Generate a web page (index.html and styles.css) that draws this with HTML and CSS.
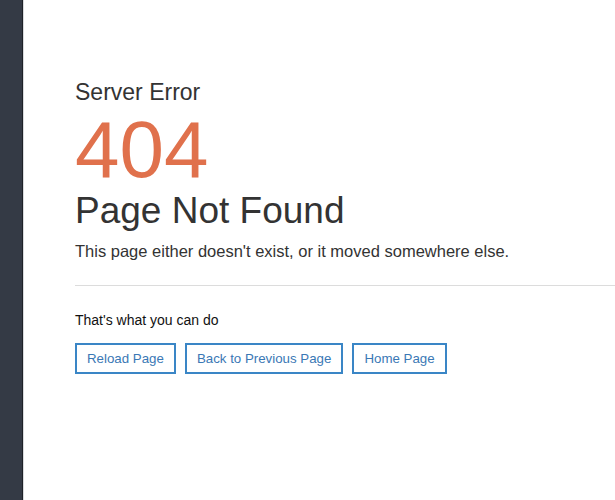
FILE: index.html
```html
<!DOCTYPE html>
<html>
<head>
<meta charset="utf-8">
<link rel="stylesheet" href="styles.css">
</head>
<body>
<div class="layout">
  <aside class="sidebar"></aside>
  <main class="content">
    <div class="intro">
      <h2 class="kicker">Server Error</h2>
      <div class="code">404</div>
      <h1 class="title">Page Not Found</h1>
      <p class="lead">This page either doesn't exist, or it moved somewhere else.</p>
    </div>
    <hr class="divider">
    <div class="actions">
      <p class="actions-label">That's what you can do</p>
      <div class="buttons">
        <a class="btn" href="#">Reload Page</a>
        <a class="btn" href="#">Back to Previous Page</a>
        <a class="btn" href="#">Home Page</a>
      </div>
    </div>
  </main>
</div>
</body>
</html>
```
FILE: styles.css
```css
html, body {
  margin: 0;
  padding: 0;
  height: 100%;
  background: #fff;
  font-family: "Liberation Sans", Arial, sans-serif;
}
.layout {
  display: flex;
  min-height: 100%;
}
.sidebar {
  width: 22px;
  flex: none;
  background: #343a45;
  border-right: 1px solid #1e2228;
  box-shadow: 1px 0 0 #d8dadd;
}
.content {
  flex: 1;
  padding-top: 78px;
}
.intro {
  padding-left: 52px;
}
.kicker {
  margin: 0;
  font-weight: normal;
  font-size: 23px;
  line-height: 28px;
  color: #333;
}
.code {
  font-size: 80px;
  line-height: 80px;
  color: #e0714c;
  margin-top: 4px;
}
.title {
  margin: 0;
  font-weight: normal;
  font-size: 37px;
  line-height: 42px;
  color: #333;
}
.lead {
  margin: 8px 0 0;
  font-size: 16.5px;
  line-height: 22px;
  color: #333;
}
.divider {
  margin: 23px 0 0 52px;
  border: 0;
  border-top: 1px solid #dcdcdc;
}
.actions {
  padding-left: 52px;
}
.actions-label {
  margin: 25px 0 0;
  font-size: 14px;
  line-height: 18px;
  color: #111;
}
.buttons {
  display: flex;
  gap: 9px;
  margin-top: 14px;
}
.btn {
  display: block;
  box-sizing: border-box;
  height: 31px;
  padding: 0 10px;
  border: 2px solid #3a86c6;
  color: #3a78b5;
  font-size: 13.3px;
  line-height: 27px;
  text-decoration: none;
}
```
